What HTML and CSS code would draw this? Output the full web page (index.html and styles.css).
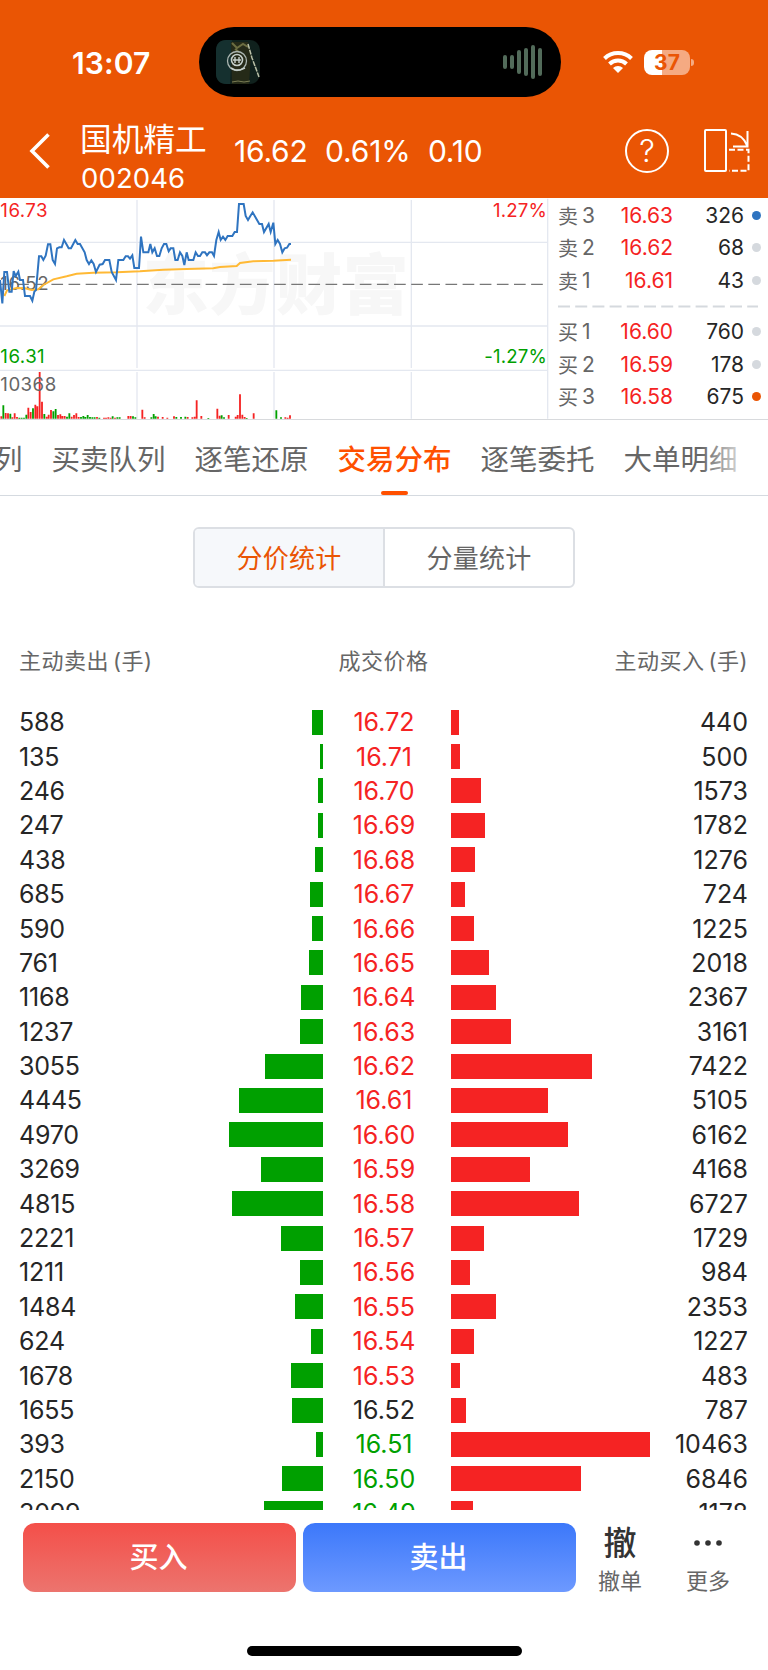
FILE: index.html
```
<!DOCTYPE html>
<html lang="zh-CN">
<head>
  <meta charset="UTF-8">
  <title>国机精工 002046</title>
  <meta name="viewport" content="width=768, initial-scale=1">
  <link rel="stylesheet" href="styles.css">
</head>
<body>
  <header class="top">
    <div class="status">
      <div class="time">13:07</div>
      <div class="island">
        <svg class="cover" width="44" height="44" viewBox="0 0 44 44">
          <rect width="44" height="44" rx="10" fill="#10211d"/>
          <path d="M0 10C0 4 4 0 10 0h6l-2 44h-4C4 44 0 40 0 34z" fill="#15302f"/>
          <path d="M15 2h17l3 12-2 30H16z" fill="#252a18"/>
          <path d="M16 3l5 5 6-4 5 3M19 9l4 3" fill="none" stroke="#6c6e42" stroke-width="2"/>
          <path d="M32 4l4 14 3 8 4 11" fill="none" stroke="#b9c1a8" stroke-width="1.5" stroke-dasharray="5 1"/>
          <path d="M16 42l6-1 6 1 6-1" fill="none" stroke="#7a7c55"/>
          <circle cx="21" cy="21" r="9.5" fill="none" stroke="#aab5b0" stroke-width="1.3"/>
          <circle cx="21" cy="20" r="5.5" fill="none" stroke="#c5cfca" stroke-width="1.6"/>
          <path d="M17 20h8M19 17v6M23 17v6M15 28l4 2 5 0 5-2" fill="none" stroke="#c5cfca" stroke-width="1.4"/>
        </svg>
        <svg class="wave" width="42" height="36" viewBox="0 0 42 36">
          <path d="M3 13v10M10 13v10M17 8v20M24 6v24M31 3v30M38 6v24" stroke="#526b5a" stroke-width="4" stroke-linecap="round"/>
        </svg>
      </div>
      <svg class="wifi" width="32" height="24" viewBox="0 0 32 24">
        <path d="M2.5 8.5a19.5 19.5 0 0 1 27 0M7.5 14a12.3 12.3 0 0 1 17 0" fill="none" stroke="#fff" stroke-width="4"/>
        <path d="M16 23l-5-5a7.2 7.2 0 0 1 10 0z" fill="#fff"/>
      </svg>
      <div class="battery"><span>37</span></div>
    </div>
    <div class="nav">
      <svg class="back" width="24" height="38" viewBox="0 0 24 38">
        <path d="M20.500 2.500L4 19l16.500 16.500" fill="none" stroke="#fff" stroke-width="3.600"/>
      </svg>
      <div class="stock">
        <div class="name">国机精工</div>
        <div class="code">002046</div>
      </div>
      <div class="quote"><span>16.62</span><span>0.61%</span><span>0.10</span></div>
      <div class="help">?</div>
      <svg class="rotate" width="48" height="46" viewBox="0 0 48 46">
        <g fill="none" stroke="#fff" stroke-width="2">
          <rect x="2" y="2" width="21" height="41" rx="1"/>
          <path d="M28 5.500c8 .5 13 4 16 12M44.500 3v15.500H30"/>
          <path d="M26 21.700h19.500v21H26" stroke-dasharray="6 2.500"/>
        </g>
      </svg>
    </div>
  </header>

  <section class="market">
    <svg class="chart" width="549" height="222" viewBox="0 24 1647 666">
      <text class="mark" x="428" y="356">东方财富</text>
      <g class="gridlines">
        <path d="M0 157H1644M0 408H1644M0 541H1644"/>
        <path d="M411 30V534M822 30V534M1234 30V534M411 546V686M822 546V686M1234 546V686M1643 26V686"/>
      </g>
      <path class="volume up" d="M4 686V679M17 686V669M24 686V670M37 686V682M44 686V670M51 686V681M85 686V653M92 686V666M106 686V644M112 686V649M119 686V546M126 686V635M140 686V680M146 686V674M153 686V660M174 686V675M181 686V673M187 686V678M194 686V678M215 686V680M222 686V675M229 686V670M236 686V681M291 686V681M312 686V683M318 686V683M325 686V682M332 686V683M345 686V683M385 686V678M392 686V678M427 686V659M434 686V682M474 686V680M488 686V681M502 686V683M522 686V679M563 686V681M577 686V682M584 686V680M590 686V631M604 686V678M652 686V656M659 686V677M686 686V675M707 686V680M713 686V675M720 686V613M727 686V674M734 686V681M761 686V670M856 686V682M863 686V683M870 686V676"/>
      <path class="volume down" d="M10 686V646M31 686V671M58 686V683M65 686V683M72 686V683M79 686V674M99 686V655M133 686V672M160 686V664M167 686V657M201 686V680M208 686V670M243 686V681M250 686V678M256 686V681M263 686V675M270 686V681M277 686V682M284 686V682M298 686V683M338 686V679M352 686V682M359 686V682M399 686V679M406 686V682M454 686V682M461 686V672M467 686V679M529 686V681M543 686V681M556 686V680M625 686V684M665 686V676M672 686V682M740 686V684M829 686V661M843 686V682"/>
      <path class="base" d="M0 283H1640"/>
      <g class="axis">
        <text x="1" y="300">16.52</text>
        <text x="1" y="602">10368</text>
        <text class="up" x="1" y="81">16.73</text>
        <text class="down" x="1" y="520">16.31</text>
        <text class="up end" x="1641" y="81">1.27%</text>
        <text class="down end" x="1641" y="520">-1.27%</text>
      </g>
      <polyline class="avg" points="13,318 21,301 50,294 75,295 95,300 115,298 130,285 160,268 200,259 230,251 280,248 350,247 420,244 490,239 560,237 640,235 660,231 710,228 720,219 760,214 820,212 873,209"/>
      <polyline class="price" points="0,270 7,340 13,246 21,246 28,305 35,305 41,243 47,258 55,245 60,270 69,270 75,318 90,318 97,332 103,305 108,300 117,199 124,199 130,210 137,197 144,163 151,163 158,210 165,222 171,175 178,172 185,172 192,150 199,162 206,175 213,175 226,150 233,162 240,162 254,187 260,210 267,222 274,211 281,222 288,246 299,224 308,222 315,210 328,210 335,246 348,270 355,210 370,210 377,199 384,199 390,206 397,196 403,234 417,234 423,140 430,187 445,187 451,162 457,187 464,175 471,198 478,198 485,175 492,162 499,162 506,184 512,175 520,175 526,210 533,210 540,187 547,198 553,225 560,187 566,210 580,210 587,187 594,198 600,198 607,187 615,187 621,196 628,187 636,187 642,198 649,150 656,126 662,150 669,140 676,150 683,138 697,138 704,126 711,126 717,42 731,42 737,78 744,90 751,78 758,67 778,102 786,102 792,126 806,102 812,126 820,98 826,162 833,150 840,162 847,187 854,175 861,173 868,162 873,162"/>
    </svg>
    <div class="book">
      <div class="level"><span class="side">卖<i>3</i></span><b>16.63</b><em>326</em><u class="dot blue"></u></div>
      <div class="level"><span class="side">卖<i>2</i></span><b>16.62</b><em>68</em><u class="dot"></u></div>
      <div class="level"><span class="side">卖<i>1</i></span><b>16.61</b><em>43</em><u class="dot"></u></div>
      <svg class="split" width="201" height="19" viewBox="0 0 201 19"><path d="M0 9.500H200" stroke="#d5d9de" stroke-width="2" stroke-dasharray="12 5.200"/></svg>
      <div class="level"><span class="side">买<i>1</i></span><b>16.60</b><em>760</em><u class="dot"></u></div>
      <div class="level"><span class="side">买<i>2</i></span><b>16.59</b><em>178</em><u class="dot"></u></div>
      <div class="level"><span class="side">买<i>3</i></span><b>16.58</b><em>675</em><u class="dot orange"></u></div>
    </div>
  </section>

  <nav class="tabs">
    <span>列</span><span>买卖队列</span><span>逐笔还原</span><span class="active">交易分布</span><span>逐笔委托</span><span>大单明细</span>
  </nav>

  <div class="segment">
    <span class="on">分价统计</span><span>分量统计</span>
  </div>

  <main class="stats">
    <div class="stats-head"><span>主动卖出<i>(手)</i></span><span class="mid">成交价格</span><span>主动买入<i>(手)</i></span></div>
    <div id="rows"></div>
  </main>

  <footer class="actions">
    <div class="btn buy">买入</div>
    <div class="btn sell">卖出</div>
    <div class="tool"><strong>撤</strong><span>撤单</span></div>
    <div class="tool more">
      <svg width="30" height="34" viewBox="0 0 30 34"><g fill="#333"><circle cx="4" cy="17" r="2.800"/><circle cx="15" cy="17" r="2.800"/><circle cx="26" cy="17" r="2.800"/></g></svg>
      <span>更多</span>
    </div>
  </footer>
  <div class="home-bar"></div>

  <script src="stats.js"></script>
</body>
</html>
```

FILE: styles.css
```
* { box-sizing: border-box; }
body {
  margin: 0;
  width: 768px;
  height: 1670px;
  overflow: hidden;
  background: #fff;
  color: #262626;
  font-family: Inter, "Noto Sans CJK SC", sans-serif;
}
i, em, u { font-style: normal; text-decoration: none; }
svg { display: block; flex: none; }

/* header */
.top { height: 198px; background: #ea5504; color: #fff; }
.status { display: flex; align-items: center; height: 124px; }
.time {
  width: 199px;
  padding-left: 72px;
  padding-top: 1px;
  font-size: 30px;
  font-weight: 600;
  letter-spacing: 0.1px;
}
.island {
  display: flex;
  align-items: center;
  justify-content: space-between;
  width: 362px;
  height: 70px;
  padding: 0 17px;
  border-radius: 35px;
  background: #000;
}
.wifi { margin-left: 41px; }
.battery {
  position: relative;
  width: 46px;
  height: 25px;
  margin-left: 10px;
  border-radius: 8px;
  background: linear-gradient(90deg, #fff 18px, #f5aa82 18px);
  color: #ea5504;
  font-size: 21px;
  font-weight: 700;
  line-height: 25px;
  text-align: center;
}
.battery::after {
  content: "";
  position: absolute;
  right: -4px;
  top: 9px;
  width: 3px;
  height: 7px;
  border-radius: 0 3px 3px 0;
  background: #f5aa82;
}
.nav { display: flex; height: 74px; }
.back { margin: 8px 0 0 28px; }
.stock { width: 153px; margin-left: 29px; }
.name { font-size: 31.700px; line-height: 32px; margin-left: -1px; white-space: nowrap; }
.code { margin-top: 6px; font-size: 27.5px; line-height: 32px; letter-spacing: 0.1px; }
.quote {
  display: flex;
  gap: 17.500px;
  width: 391px;
  font-size: 30px;
  line-height: 55px;
  letter-spacing: -0.2px;
}
.help {
  width: 44px;
  height: 44px;
  margin-top: 5px;
  border: 2px solid #fff;
  border-radius: 50%;
  font-size: 31px;
  font-weight: 300;
  line-height: 39px;
  text-align: center;
}
.rotate { margin: 4px 0 0 34px; }

/* chart and order book */
.market {
  display: flex;
  height: 222px;
  border-bottom: 1px solid #d8dadd;
}
.gridlines { fill: none; stroke: #e4e8f0; stroke-width: 4; }
.mark { font-size: 198px; font-weight: 900; fill: #f7f7f7; letter-spacing: 2px; }
.volume { stroke-width: 5.5; }
.volume.up { stroke: #f52323; }
.volume.down { stroke: #00a000; }
.base { stroke: #777; stroke-width: 4; stroke-dasharray: 35 16.400; }
.axis text { font-size: 56px; fill: #666; letter-spacing: 1.4px; }
.axis .up { fill: #f52323; }
.axis .down { fill: #00a000; }
.axis .end { text-anchor: end; letter-spacing: 0.5px; }
.avg { fill: none; stroke: #ffb935; stroke-width: 6; }
.price { fill: none; stroke: #2f74c0; stroke-width: 6; }
.book { flex: 1; padding: 1px 8px 0 9px; }
.level {
  display: flex;
  align-items: center;
  height: 32.500px;
  font-size: 21px;
}
.side { display: flex; align-items: center; gap: 4px; width: 42px; color: #666; font-size: 20px; }
.side i { font-size: 21px; }
.level b { width: 73px; color: #f52323; font-weight: 400; text-align: right; }
.level em { width: 71px; text-align: right; }
.dot { width: 9px; height: 9px; margin-left: 8px; border-radius: 50%; background: #d5d9de; }
.dot.blue { background: #2f74c0; }
.dot.orange { background: #ea5504; }

/* tabs */
.tabs {
  position: relative;
  display: flex;
  gap: 29px;
  height: 76px;
  padding-top: 19px;
  border-bottom: 1px solid #d5dae0;
  color: #666;
  font-size: 28.500px;
  line-height: 42px;
  white-space: nowrap;
}
.tabs span { flex: none; }
.tabs span:first-child { margin-left: -6px; }
.tabs .active { position: relative; color: #ff5000; font-weight: 500; }
.tabs .active::after {
  content: "";
  position: absolute;
  left: 43px;
  bottom: 0;
  width: 27px;
  height: 4px;
  border-radius: 2px;
  background: #ff5000;
}
.tabs::after {
  content: "";
  position: absolute;
  right: 0;
  top: 0;
  width: 68px;
  height: 74px;
  background: linear-gradient(90deg, rgba(255,255,255,0), #fff 80%);
}
.segment {
  display: flex;
  width: 382px;
  height: 61px;
  margin: 31px auto 0;
  border: 2px solid #dcdfe4;
  border-radius: 6px;
  overflow: hidden;
}
.segment span {
  flex: 1;
  color: #666;
  font-size: 26px;
  line-height: 59px;
  letter-spacing: 0.300px;
  text-align: center;
}
.segment .on { border-right: 2px solid #dcdfe4; background: #f6f8fb; color: #ea5504; }

/* price distribution */
.stats { height: 922px; padding: 55px 20px 0; overflow: hidden; }
.stats-head {
  display: grid;
  grid-template-columns: 1fr 128px 1fr;
  height: 62px;
  margin-left: -1px;
  color: #666;
  font-size: 22px;
  line-height: 36px;
  letter-spacing: 0.500px;
  text-align: center;
}
.stats-head span:first-child { text-align: left; }
.stats-head span:last-child { text-align: right; }
.stats-head i { margin-left: 4px; }
.row {
  display: grid;
  grid-template-columns: 151px 152px 128px 198px 1fr;
  align-items: center;
  height: 34.400px;
  margin-left: -1px;
  padding-left: 1px;
  font-size: 25px;
}
.qty { margin-left: -1px; letter-spacing: -0.2px; }
.bar { height: 25px; }
.bar.sold { justify-self: end; background: #00a000; }
.bar.bought { background: #f52323; }
.at { padding-right: 6px; text-align: center; }
.at.up { color: #f52323; }
.at.down { color: #00a000; }
.bought-qty { text-align: right; }

/* bottom bar */
.actions { display: flex; padding: 13px 0 0 23px; height: 136px; }
.btn {
  width: 273px;
  height: 69px;
  margin-right: 7px;
  border-radius: 12px;
  color: #fff;
  font-size: 29px;
  font-weight: 500;
  line-height: 69px;
  text-align: center;
  text-indent: -2px;
}
.buy { background: linear-gradient(#f44f49, #ec746e); }
.sell { background: linear-gradient(#3c78fa, #6d99ff); }
.tool {
  display: flex;
  flex-direction: column;
  align-items: center;
  width: 88px;
  margin-left: -7px;
  padding-top: 3px;
  color: #666;
  font-size: 22px;
  line-height: 30px;
}
.tool strong { height: 40px; color: #333; font-size: 33px; font-weight: 500; line-height: 34px; }
.tool.more { margin-left: 0; }
.tool.more svg { margin-bottom: 6px; }
.home-bar { width: 275px; height: 10px; margin: 0 auto; border-radius: 5px; background: #000; }
```

FILE: stats.js
```
const PREV_CLOSE = 16.52;
const PX_PER_LOT = 0.01898;

// sold, price, bought
const data = [
  [588, 16.72, 440],
  [135, 16.71, 500],
  [246, 16.70, 1573],
  [247, 16.69, 1782],
  [438, 16.68, 1276],
  [685, 16.67, 724],
  [590, 16.66, 1225],
  [761, 16.65, 2018],
  [1168, 16.64, 2367],
  [1237, 16.63, 3161],
  [3055, 16.62, 7422],
  [4445, 16.61, 5105],
  [4970, 16.60, 6162],
  [3269, 16.59, 4168],
  [4815, 16.58, 6727],
  [2221, 16.57, 1729],
  [1211, 16.56, 984],
  [1484, 16.55, 2353],
  [624, 16.54, 1227],
  [1678, 16.53, 483],
  [1655, 16.52, 787],
  [393, 16.51, 10463],
  [2150, 16.50, 6846],
  [3099, 16.49, 1178]
];

document.getElementById('rows').innerHTML = data.map(([sold, price, bought]) => {
  const dir = price > PREV_CLOSE ? 'up' : price < PREV_CLOSE ? 'down' : '';
  return `<div class="row">
    <span class="qty">${sold}</span>
    <div class="bar sold" style="width:${sold * PX_PER_LOT}px"></div>
    <span class="at ${dir}">${price.toFixed(2)}</span>
    <div class="bar bought" style="width:${bought * PX_PER_LOT}px"></div>
    <span class="bought-qty">${bought}</span>
  </div>`;
}).join('');
```
